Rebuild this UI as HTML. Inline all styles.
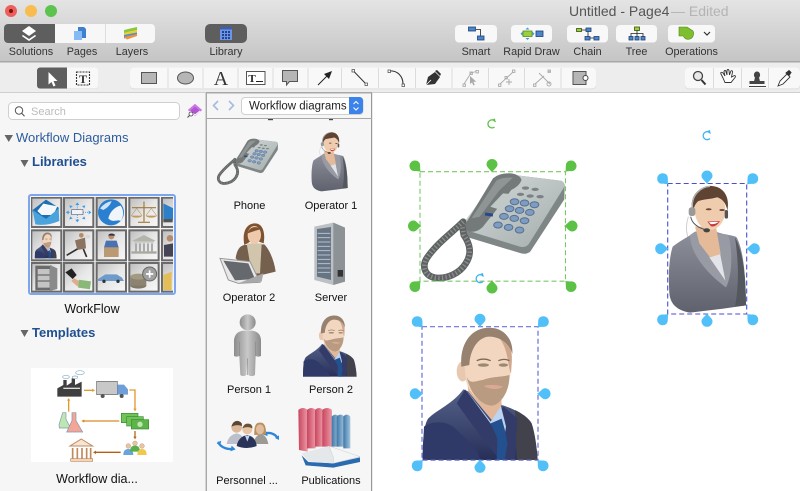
<!DOCTYPE html>
<html><head><meta charset="utf-8"><title>Untitled - Page4</title>
<style>
html,body{margin:0;padding:0;width:800px;height:491px;overflow:hidden;background:#fff}
svg{display:block;position:absolute;left:0;top:0}
text{font-family:"Liberation Sans",sans-serif}
.tb{font-size:10.8px;fill:#333;text-anchor:middle}
.lb{font-size:11px;fill:#111;text-anchor:middle}
.hd{font-size:13px;font-weight:bold;fill:#1f4f91}
</style></head><body>
<svg width="800" height="491" viewBox="0 0 800 491" xmlns="http://www.w3.org/2000/svg">
<defs>
<linearGradient id="tg" x1="0" y1="0" x2="0" y2="1"><stop offset="0" stop-color="#e4e4e4"/><stop offset="1" stop-color="#c5c5c5"/></linearGradient>
<linearGradient id="pb" x1="0" y1="0" x2="1" y2="1"><stop offset="0" stop-color="#d6dcdc"/><stop offset="1" stop-color="#a4acac"/></linearGradient>
<linearGradient id="jk" x1="0" y1="0" x2="0" y2="1"><stop offset="0" stop-color="#8d909a"/><stop offset="1" stop-color="#5f626c"/></linearGradient>
<linearGradient id="nv" x1="0" y1="0" x2="0" y2="1"><stop offset="0" stop-color="#566289"/><stop offset="1" stop-color="#262f58"/></linearGradient>
<linearGradient id="gp" x1="0" y1="0" x2="1" y2="0"><stop offset="0" stop-color="#8c8c8c"/><stop offset=".5" stop-color="#c8c8c8"/><stop offset="1" stop-color="#8a8a8a"/></linearGradient>
<linearGradient id="rd" x1="0" y1="0" x2="1" y2="0"><stop offset="0" stop-color="#c9455f"/><stop offset="1" stop-color="#eb9aa6"/></linearGradient>
<linearGradient id="bl" x1="0" y1="0" x2="1" y2="0"><stop offset="0" stop-color="#3f77a8"/><stop offset="1" stop-color="#a2c4dc"/></linearGradient>
<linearGradient id="cell" x1="0" y1="0" x2="1" y2="1"><stop offset="0" stop-color="#bdbdbd"/><stop offset=".5" stop-color="#e6e6e6"/><stop offset="1" stop-color="#f8f8f8"/></linearGradient>
<clipPath id="thumbclip"><rect x="31" y="197" width="142" height="96"/></clipPath>

<path id="h" d="M-5.5,0A5.5,5.5 0 1 1 5.5,0C5.5,3 1.5,5 0,8C-1.5,5 -5.5,3 -5.5,0Z"/>

<symbol id="phone" viewBox="60 185 440 330" preserveAspectRatio="none">
<path d="M190,345L295,200Q305,190 320,192L485,212Q497,216 496,232L495,268L392,425Q380,434 365,430L205,382Q188,372 190,345Z" fill="#7f8686"/>
<path d="M190,340L295,200Q305,190 320,192L485,212Q497,216 494,232L388,402Q378,414 362,410L205,362Q188,355 190,340Z" fill="url(#pb)"/>
<path d="M195,345L280,205Q300,188 335,190Q362,194 366,210Q360,228 335,240L290,300L248,352Q225,372 203,362Q190,355 195,345Z" fill="#747a7a"/>
<path d="M215,325L290,212Q310,200 340,203L300,240L240,320Z" fill="#8f9595"/>
<path d="M272,290L310,250L335,252L298,298Z" fill="#c0c9c6"/>
<rect x="256" y="309" width="24" height="9" fill="#27488c" transform="rotate(8 268 313)"/>
<g fill="#7c8284"><ellipse cx="378" cy="234" rx="11" ry="5"/><ellipse cx="407" cy="238" rx="11" ry="5"/><ellipse cx="363" cy="253" rx="11" ry="5"/><ellipse cx="392" cy="258" rx="11" ry="5"/><ellipse cx="422" cy="260" rx="11" ry="5"/></g>
<g fill="#7e9cc2" stroke="#56708f" stroke-width="3"><ellipse cx="345" cy="275" rx="13" ry="9"/><ellipse cx="375" cy="279" rx="13" ry="9"/><ellipse cx="405" cy="284" rx="13" ry="9"/><ellipse cx="330" cy="296" rx="13" ry="9"/><ellipse cx="360" cy="301" rx="13" ry="9"/><ellipse cx="391" cy="307" rx="13" ry="9"/><ellipse cx="313" cy="319" rx="13" ry="9"/><ellipse cx="344" cy="325" rx="13" ry="9"/><ellipse cx="375" cy="332" rx="13" ry="9"/><ellipse cx="295" cy="345" rx="13" ry="9"/><ellipse cx="327" cy="352" rx="13" ry="9"/><ellipse cx="360" cy="360" rx="13" ry="9"/></g>
<path d="M190,335C160,365 110,400 80,445C65,470 75,498 105,503C140,508 180,490 198,460C218,430 210,400 192,375L188,352" fill="none" stroke="#5f6262" stroke-width="20" stroke-linecap="round"/>
<path d="M190,335C160,365 110,400 80,445C65,470 75,498 105,503C140,508 180,490 198,460C218,430 210,400 192,375L188,352" fill="none" stroke="#8b8e8e" stroke-width="14" stroke-dasharray="4 7"/>
</symbol>

<symbol id="op1" viewBox="83 190 237 392" preserveAspectRatio="none">
<path d="M98,380C120,362 150,348 165,335L228,335C252,345 280,345 290,352C305,380 317,440 318,556L250,566L150,578C120,572 92,560 88,520C84,460 88,410 98,380Z" fill="url(#jk)"/>
<path d="M285,352C305,390 317,450 318,556L285,560C298,490 295,420 285,352Z" fill="#55575f"/>
<path d="M150,345C150,400 200,460 258,502C275,470 280,400 265,345L232,340L240,420L165,335Z" fill="#989ba4"/>
<path d="M208,412L240,400L256,482Z" fill="#e3e4ea"/>
<path d="M165,320L228,320L242,402L210,412L178,370Z" fill="#e5ba98"/>
<ellipse cx="210" cy="270" rx="46" ry="60" fill="#f0ccae"/>
<path d="M156,268C148,218 190,196 215,198C252,200 270,232 262,272C258,250 248,238 232,232C212,238 186,238 174,244C166,252 162,260 162,270Z" fill="#5f4333"/>
<path d="M158,270C150,225 185,200 210,199" fill="none" stroke="#b0b0b0" stroke-width="4"/>
<rect x="146" y="262" width="20" height="26" rx="8" fill="#9a9a9a"/><rect x="254" y="270" width="10" height="26" rx="5" fill="#555"/>
<path d="M152,290C155,310 175,325 200,330" fill="none" stroke="#555" stroke-width="3"/>
<path d="M145,290C135,320 140,340 143,350" fill="none" stroke="#cfcfcf" stroke-width="3"/>
<ellipse cx="200" cy="331" rx="10" ry="6" fill="#444"/>
<ellipse cx="206" cy="268" rx="9" ry="3" fill="#6a4a38"/><ellipse cx="246" cy="270" rx="8" ry="3" fill="#6a4a38"/>
<path d="M202,305Q222,303 240,304Q225,325 212,318Z" fill="#c7393f"/><path d="M206,307Q222,305 236,306Q224,314 212,312Z" fill="#fff"/>
</symbol>

<symbol id="man" viewBox="66 50 347 400" preserveAspectRatio="none">
<path d="M68,450C68,400 70,345 85,325C110,300 160,280 190,238L305,285C340,295 385,320 395,340C405,370 410,410 413,450Z" fill="url(#nv)"/>
<path d="M72,350C100,330 150,330 180,370C215,400 235,420 240,450H68Z" fill="#2f3a68"/>
<path d="M345,300C385,320 392,335 397,350C405,380 410,415 413,450L350,450Z" fill="#42424c"/>
<path d="M170,280L195,238L272,335L310,290L352,325L345,450L300,450L250,390Z" fill="#333c68"/>
<path d="M198,240L272,335L302,285L318,350L312,385L275,345Z" fill="#bcd4f0"/>
<path d="M272,340L305,326L314,358L322,400L314,450L290,450L292,385Z" fill="#23508e"/>
<path d="M200,200L300,200L305,285L275,330L205,245Z" fill="#e3b89a"/>
<ellipse cx="188" cy="184" rx="18" ry="30" fill="#e8c8ae"/>
<path d="M190,130C190,85 225,60 270,60C315,60 338,100 335,145C335,205 318,262 280,287C245,287 212,255 198,215Z" fill="#f3d6bf"/>
<path d="M295,80C330,90 338,125 335,160L333,190C322,170 328,120 295,80Z" fill="#cfa78e"/>
<path d="M184,170C178,100 215,52 268,53C312,52 340,88 337,132C328,100 300,78 262,80C232,85 210,120 208,165Z" fill="#97816f"/>
<path d="M200,200C210,225 228,212 248,210C270,200 300,202 328,195C330,240 305,280 278,287C245,287 212,255 200,200Z" fill="#b89b80"/>
<path d="M250,228Q280,220 310,230Q285,245 250,228Z" fill="#dba998"/>
<ellipse cx="250" cy="165" rx="17" ry="5" fill="#9a8870"/><ellipse cx="310" cy="165" rx="14" ry="5" fill="#9a8870"/>
<path d="M230,152Q250,142 272,152M295,152Q312,144 328,152" fill="none" stroke="#7e6858" stroke-width="4"/>
</symbol>
</defs>

<!-- background -->
<rect width="800" height="491" fill="#fff"/>
<rect width="800" height="61" fill="url(#tg)"/>
<rect y="61" width="800" height="1.5" fill="#a8a8a8"/>
<rect y="62.5" width="800" height="30" fill="#ededed"/>
<rect y="92" width="800" height="1" fill="#cfcfcf"/>
<rect y="93" width="206" height="398" fill="#f6f6f6"/>
<rect x="205" y="93" width="1" height="398" fill="#d4d4d4"/>
<rect x="206" y="93" width="166" height="398" fill="#f6f6f6"/>
<rect x="206" y="92" width="166" height="1.5" fill="#a8a8a8"/>
<rect x="206" y="93" width="1" height="398" fill="#a8a8a8"/>
<rect x="371" y="93" width="1.2" height="398" fill="#999"/>
<rect x="206" y="118" width="166" height="1" fill="#a8a8a8"/>

<!-- traffic -->
<circle cx="11" cy="11" r="6" fill="#ee5f5b"/><circle cx="11" cy="11" r="2" fill="#6b1712"/>
<circle cx="31" cy="11" r="6" fill="#f8bd4e"/><circle cx="51" cy="11" r="6" fill="#5cc34f"/>

<!-- top seg -->
<rect x="4" y="24" width="151" height="19" rx="4" fill="#f7f7f7"/>
<path d="M8,24H55V43H8a4,4 0 0 1 -4,-4V28a4,4 0 0 1 4,-4Z" fill="#5e5e5e"/>
<rect x="105" y="24" width="1" height="19" fill="#ddd"/>
<path d="M29,26l7,5 -7,5 -7,-5Z" fill="#fff"/><path d="M23,35l6,4 6,-4 1.2,1 -7.2,5 -7.2,-5Z" fill="#fff"/>
<path d="M78,27h6l2,2v9h-8Z" fill="#3f7fd0"/><path d="M74,31h8v9h-8Z" fill="#86baf3"/>
<path d="M124,30l13,-3v3l-13,3Z" fill="#8cc63f"/><path d="M124,33l13,-3v3l-13,3Z" fill="#f0cd2e"/><path d="M124,35l13,-2.5v3l-13,3Z" fill="#4f8fd8"/><path d="M124,37l13,-3v2l-10,3.5Z" fill="#f0923a"/>
<text x="31" y="55" class="tb">Solutions</text><text x="82" y="55" class="tb">Pages</text><text x="132" y="55" class="tb">Layers</text>

<rect x="205" y="24" width="42" height="19" rx="5" fill="#5e5e5e"/>
<rect x="220" y="27" width="12" height="13" fill="#6c95e8"/><rect x="220" y="27" width="12" height="2.5" fill="#3c5fb0"/>
<g fill="#24428c"><rect x="222" y="31" width="2" height="2"/><rect x="225" y="31" width="2" height="2"/><rect x="228" y="31" width="2" height="2"/><rect x="222" y="34" width="2" height="2"/><rect x="225" y="34" width="2" height="2"/><rect x="228" y="34" width="2" height="2"/><rect x="222" y="37" width="2" height="2"/><rect x="225" y="37" width="2" height="2"/><rect x="228" y="37" width="2" height="2"/></g>
<text x="226" y="55" class="tb">Library</text>

<!-- title -->
<text x="569" y="16" font-size="14" fill="#555">Untitled - Page4</text>
<text x="671" y="16" font-size="14" fill="#b4b4b4">— Edited</text>

<!-- right buttons -->
<g fill="#f8f8f8"><rect x="455" y="25" width="42" height="17.5" rx="4"/><rect x="511" y="25" width="41" height="17.5" rx="4"/><rect x="567" y="25" width="41" height="17.5" rx="4"/><rect x="616" y="25" width="41" height="17.5" rx="4"/><rect x="668" y="25" width="47" height="17.5" rx="4"/></g>
<path d="M476,29.5h4.5V36" fill="none" stroke="#222" stroke-width=".8"/>
<rect x="468.5" y="27" width="7" height="4" fill="#4a86c8" stroke="#1c3f78" stroke-width=".8"/><rect x="477.5" y="36" width="6.5" height="4" fill="#4a86c8" stroke="#1c3f78" stroke-width=".8"/>
<rect x="523" y="31" width="9" height="5.5" fill="#9ad03c" stroke="#5a8a1e" stroke-width=".8"/>
<rect x="536" y="31" width="7" height="5.5" fill="#4a86c8" stroke="#1c3f78" stroke-width=".8"/>
<path d="M527.5,27.5l2,2h-4ZM527.5,40l2,-2h-4ZM520.5,33.7l2,-2v4ZM534.5,33.7l-2,-2v4Z" fill="#3a96e8"/>
<rect x="576.5" y="28.5" width="5" height="3" fill="#9ad03c" stroke="#36520e" stroke-width=".8"/>
<rect x="586" y="28" width="5" height="3.5" fill="#4a86c8" stroke="#1c3f78" stroke-width=".8"/>
<rect x="585" y="36.5" width="5" height="3.5" fill="#4a86c8" stroke="#1c3f78" stroke-width=".8"/><rect x="594" y="36.5" width="5" height="3.5" fill="#4a86c8" stroke="#1c3f78" stroke-width=".8"/>
<path d="M581.5,30h4.5M588,31.5v5M590,38h4" stroke="#222" stroke-width=".8"/>
<rect x="634.5" y="27" width="5" height="3.5" fill="#9ad03c" stroke="#36520e" stroke-width=".8"/>
<g fill="#4a86c8" stroke="#1c3f78" stroke-width=".8"><rect x="629" y="36.5" width="4" height="3.5"/><rect x="635" y="36.5" width="4" height="3.5"/><rect x="641" y="36.5" width="4" height="3.5"/></g>
<path d="M637,30.5v6M631,36.5v-3h12v3" fill="none" stroke="#222" stroke-width=".8"/>
<path d="M679,27h8l6,4c1.5,3 0,7 -3,8c-3,1 -6,-.5 -6.5,-3h-4.5Z" fill="#7fbe2e" stroke="#4d8a16" stroke-width=".6"/>
<path d="M704,32l3,3 3,-3" fill="none" stroke="#333" stroke-width="1.2"/>
<text x="476" y="55" class="tb">Smart</text><text x="531.5" y="55" class="tb">Rapid Draw</text><text x="587.5" y="55" class="tb">Chain</text><text x="636.5" y="55" class="tb">Tree</text><text x="691.5" y="55" class="tb">Operations</text>

<!-- toolbar groups -->
<rect x="37" y="67.5" width="61" height="21.5" rx="3" fill="#ddd"/>
<rect x="37" y="67.5" width="61" height="21" rx="3" fill="#f8f8f8"/>
<path d="M40,67.5H67V88.5H40a3,3 0 0 1 -3,-3V70.5a3,3 0 0 1 3,-3Z" fill="#5e5e5e"/>
<path d="M48.5,72v12.5l3,-2.5 2,4.5 2,-1 -2,-4.500h4Z" fill="#fff"/>
<rect x="76.5" y="72" width="13" height="13" fill="none" stroke="#333" stroke-width="1.1" stroke-dasharray="2 1"/>
<text x="83" y="83" font-size="12" font-weight="bold" text-anchor="middle" fill="#333" style="font-family:'Liberation Serif',serif">T</text>

<rect x="130" y="67.5" width="466" height="21.8" rx="4" fill="#d8d8d8"/>
<rect x="130" y="67.5" width="466" height="21" rx="4" fill="#f8f8f8"/>
<g fill="#dcdcdc"><rect x="167.5" y="68" width="1" height="20"/><rect x="202.5" y="68" width="1" height="20"/><rect x="237.5" y="68" width="1" height="20"/><rect x="272.5" y="68" width="1" height="20"/><rect x="307.5" y="68" width="1" height="20"/><rect x="341" y="68" width="1" height="20"/><rect x="378" y="68" width="1" height="20"/><rect x="415" y="68" width="1" height="20"/><rect x="451.5" y="68" width="1" height="20"/><rect x="488" y="68" width="1" height="20"/><rect x="524" y="68" width="1" height="20"/><rect x="560.5" y="68" width="1" height="20"/></g>
<rect x="141.5" y="72.5" width="15" height="11" fill="#b6b6b6" stroke="#555" stroke-width="1"/>
<ellipse cx="185.5" cy="78" rx="8" ry="6" fill="#b6b6b6" stroke="#555" stroke-width="1"/>
<text x="221" y="85" font-size="20" text-anchor="middle" fill="#333" style="font-family:'Liberation Serif',serif">A</text>
<rect x="246.5" y="71.5" width="18.5" height="13" fill="#fff" stroke="#555" stroke-width="1"/>
<text x="252" y="82" font-size="11" font-weight="bold" text-anchor="middle" fill="#222" style="font-family:'Liberation Serif',serif">T</text><rect x="256" y="81" width="7" height="1" fill="#222"/>
<path d="M282.5,70.5h15v11h-8l-3,3.5v-3.5h-4Z" fill="#b6b6b6" stroke="#555" stroke-width="1"/>
<path d="M318,85L330,73" stroke="#222" stroke-width="1"/><path d="M332,71l-3,8 -5,-5Z" fill="#222"/>
<path d="M353,70.5L366,84" stroke="#333" stroke-width="1"/><rect x="352" y="69.5" width="2.5" height="2.5" fill="#fff" stroke="#444" stroke-width=".7"/><rect x="365" y="83" width="2.5" height="2.5" fill="#fff" stroke="#444" stroke-width=".7"/>
<path d="M389,71C397,70 403,76 403,84" fill="none" stroke="#333" stroke-width="1.1"/><rect x="388" y="70" width="2.5" height="2.5" fill="#fff" stroke="#444" stroke-width=".7"/><rect x="402" y="84" width="2.5" height="2.5" fill="#fff" stroke="#444" stroke-width=".7"/>
<path d="M426,85l2,-8 7,-5 5,5 -5,7Z" fill="#333"/><path d="M426,85l5,-5" stroke="#fff" stroke-width=".8"/><path d="M435,71l2,-1 4,4 -1,2Z" fill="#333"/>
<g fill="none" stroke="#aaa" stroke-width=".9">
<path d="M464,84L471,73L476,71.5"/><rect x="463" y="84" width="2.4" height="2.4"/><rect x="470" y="72" width="2.4" height="2.4"/><rect x="476" y="70.5" width="2.4" height="2.4"/>
<path d="M500,84L513,72"/><rect x="498.5" y="84" width="2.4" height="2.4"/><rect x="512.5" y="70" width="2.4" height="2.4"/><rect x="505" y="76.5" width="2.4" height="2.4"/>
<path d="M535,84L544,76M548,72L550,71M539,73L550,84"/><rect x="533.5" y="84" width="2.4" height="2.4"/><rect x="548" y="70" width="2.4" height="2.4"/><circle cx="549" cy="84" r="2"/>
</g>
<path d="M470,76v8l2,-1.5 1.5,3 1.3,-.7 -1.5,-3h3Z" fill="#aaa"/>
<path d="M506,82h6M509,79v6" stroke="#aaa" stroke-width="1"/>
<rect x="573" y="71.5" width="13" height="13" fill="#b6b6b6" stroke="#555" stroke-width="1"/><circle cx="585.5" cy="78" r="2.5" fill="#fff" stroke="#444"/>

<rect x="685" y="67.5" width="115" height="21.8" rx="4" fill="#d8d8d8"/>
<rect x="685" y="67.5" width="115" height="21" rx="4" fill="#f8f8f8"/>
<g fill="#dcdcdc"><rect x="713" y="68" width="1" height="20"/><rect x="741" y="68" width="1" height="20"/><rect x="768" y="68" width="1" height="20"/></g>
<circle cx="698" cy="76" r="4.5" fill="#e8e8e8" stroke="#444" stroke-width="1.3"/><path d="M701.5,80l4,4.5" stroke="#333" stroke-width="2"/>
<path d="M723,78l-2,-4c-1,-2 1,-2 2,-1l2,3 -1,-4c0,-2 2,-2 2,0l1,3 0,-4c0,-2 2,-2 2,0l.5,4 1,-3c.5,-2 2,-1.5 2,0l-1,5 2,-1c1.5,-1 2.5,0 1.5,1.5l-4,5h-6Z" fill="#fff" stroke="#333" stroke-width=".9"/>
<path d="M749,86.5h17M750,83.5h14v-2h-4.5l-1,-4c2,-2 1,-5.500 -1.5,-5.500s-3.500,3.500 -1.500,5.500l-1,4h-4.500Z" fill="#444" stroke="#444" stroke-width="1"/>
<path d="M778,86l2,-5 7,-7 3,3 -7,7Z" fill="#fff" stroke="#333" stroke-width=".9"/><path d="M786,73l3,-2.5 2,2 -2,3Z" fill="#333" stroke="#333"/>

<!-- search -->
<rect x="8.5" y="102.5" width="171" height="17" rx="4" fill="#fff" stroke="#cfcfcf"/>
<circle cx="19" cy="110.5" r="3.7" fill="none" stroke="#555" stroke-width="1"/><path d="M21.7,113.3l2.8,3" stroke="#555" stroke-width="1.1"/>
<text x="31" y="115" font-size="11" fill="#bbb">Search</text>
<path d="M195,104l7,6 -7,6 -7,-6Z" fill="#b254d6"/><path d="M195,104l7,6 -1.5,1.3 -5.5,-4.600 -5.5,4.600 -1.5,-1.3Z" fill="#c977e6"/><path d="M190,111l5,4 5,-4" stroke="#fff" stroke-width="1" fill="none"/>
<circle cx="191" cy="114" r="2" fill="#fff" stroke="#444" stroke-width=".8"/><path d="M189.5,115.5l-2,2" stroke="#444"/>

<!-- tree -->
<path d="M4.5,135h8.500l-4.250,7Z" fill="#666"/>
<text x="16" y="142" font-size="13" fill="#2c5c9c">Workflow Diagrams</text>
<path d="M20.5,160h8l-4,7Z" fill="#666"/>
<text x="32" y="166" class="hd">Libraries</text>

<!-- library thumb -->
<rect x="29" y="195" width="146" height="99" rx="2" fill="#f4f4f4" stroke="#7ea6ee" stroke-width="2"/>
<g clip-path="url(#thumbclip)">
<g transform="translate(0,95) scale(.3333)">
<g fill="url(#cell)" stroke="#6a6a6a" stroke-width="6">
<rect x="94" y="308" width="90" height="88"/><rect x="192" y="308" width="88" height="88"/><rect x="290" y="308" width="88" height="88"/><rect x="388" y="308" width="88" height="88"/><rect x="486" y="308" width="88" height="88"/>
<rect x="94" y="406" width="90" height="90"/><rect x="192" y="406" width="88" height="90"/><rect x="290" y="406" width="88" height="90"/><rect x="388" y="406" width="88" height="90"/><rect x="486" y="406" width="88" height="90"/>
<rect x="94" y="504" width="90" height="86"/><rect x="192" y="504" width="88" height="86"/><rect x="290" y="504" width="88" height="86"/><rect x="388" y="504" width="88" height="86"/><rect x="486" y="504" width="88" height="86"/>
</g>
<!-- envelope -->
<path d="M98,345L138,314L176,338V350L138,372L98,350Z" fill="#1f6fb0"/><path d="M112,348L130,326L172,334L160,360H125Z" fill="#f4f8fb"/><path d="M98,345L138,372L176,340L178,378Q140,394 106,388Z" fill="#4aa3dc"/>
<!-- network -->
<rect x="215" y="344" width="34" height="15" fill="#f2f2f6" stroke="#667" stroke-width="2"/>
<g fill="#3f9be6"><path d="M232,322l6,8h-12ZM232,382l6,-8h-12ZM198,352l8,-6v12ZM274,352l-8,-6v12ZM208,331l10,2 -7,7ZM256,331l-10,2 7,7ZM208,373l10,-2 -7,-7ZM256,373l-10,-2 7,-7Z"/></g>
<g stroke="#3f9be6" stroke-width="2.5" stroke-dasharray="3 3"><path d="M232,344V330M232,360V374M215,352H206M249,352H266"/></g>
<!-- globe -->
<circle cx="333" cy="352" r="39" fill="#2a7fd0"/><path d="M325,370C330,350 345,335 362,332C372,345 372,365 362,378C350,372 340,385 325,370Z" fill="#f0f5f9"/><path d="M300,340Q315,322 335,318Q330,335 310,345Z" fill="#cfe3f3"/>
<!-- scale -->
<path d="M432,320V380M396,338H468M414,382H450" stroke="#a07a3a" stroke-width="3.500" fill="none"/><path d="M393,362a18,9 0 0 0 34,0ZM437,362a18,9 0 0 0 34,0Z" fill="#c49a55"/><path d="M410,340L394,362M410,340L426,362M454,340L438,362M454,340L470,362" stroke="#a07a3a" stroke-width="1.500"/>
<!-- monitor -->
<path d="M490,325L530,345V375L490,372Z" fill="#2d80c8"/><rect x="490" y="372" width="28" height="10" fill="#555"/>
<!-- man -->
<use href="#man" x="104" y="412" width="66" height="78"/>
<!-- runner -->
<circle cx="244" cy="421" r="7" fill="#b58b6a"/><path d="M225,436L255,428L258,460L232,465Z" fill="#8a7460"/><path d="M232,462L200,481M250,462L260,486" stroke="#333" stroke-width="5" fill="none"/><rect x="256" y="420" width="14" height="10" fill="#d8d8d8"/>
<!-- worker -->
<circle cx="334" cy="424" r="9" fill="#b88e6e"/><path d="M335,416q-10,0 -10,6h20q0,-6 -10,-6Z" fill="#334"/><path d="M312,458L318,437L350,437L356,458Z" fill="#4a72b0"/><rect x="312" y="457" width="44" height="29" fill="#b99a72"/>
<!-- bank -->
<path d="M432,420L468,438H396Z" fill="#b4b4ac"/><rect x="402" y="438" width="60" height="5" fill="#c4c4bc"/><path d="M408,445v24M420,445v24M432,445v24M444,445v24M456,445v24" stroke="#aaa" stroke-width="6"/><rect x="394" y="469" width="76" height="7" fill="#a8a8a0"/>
<!-- person partial -->
<circle cx="510" cy="430" r="10" fill="#b58b6a"/><path d="M492,485V450L520,445V485Z" fill="#445"/>
<!-- safe -->
<rect x="106" y="512" width="50" height="74" fill="#6b6b6b"/><rect x="113" y="522" width="36" height="56" fill="#c4c4c4"/><path d="M113,540h36M113,558h36" stroke="#555" stroke-width="3"/><path d="M150,510L172,520V582L150,588Z" fill="#8a8a8a"/>
<!-- hand -->
<path d="M196,532L215,520L230,540L218,552Z" fill="#222"/><path d="M222,550L248,562L232,574L214,558Z" fill="#dcae8e"/><rect x="236" y="556" width="36" height="24" fill="#8ab878" transform="rotate(8 250 565)"/>
<!-- car -->
<path d="M294,552L316,538L350,538L366,548L372,558H294Z" fill="#6d9ccc"/><circle cx="312" cy="559" r="5" fill="#333"/><circle cx="354" cy="559" r="5" fill="#333"/>
<!-- coins -->
<ellipse cx="415" cy="572" rx="24" ry="9" fill="#807868"/><rect x="391" y="545" width="48" height="27" fill="#8c8470"/><ellipse cx="415" cy="545" rx="24" ry="9" fill="#a39a84"/><circle cx="449" cy="537" r="21" fill="#a0a0a0" stroke="#666" stroke-width="3"/><path d="M449,526v22M438,537h22" stroke="#fff" stroke-width="5"/>
<!-- folder -->
<path d="M490,540L515,530V585H490Z" fill="#e3bd5a"/>
</g></g>
<text x="92" y="313" font-size="12.5" fill="#111" text-anchor="middle">WorkFlow</text>

<path d="M20.5,330h8l-4,7Z" fill="#666"/>
<text x="32" y="337" class="hd">Templates</text>

<!-- template image -->
<rect x="31" y="368" width="142" height="94" fill="#fff"/>
<g transform="translate(0,320) scale(.3333)">
<path d="M172,230V205L190,195V180H200V197L215,187V175H225V195L245,185V230Z" fill="#3f3f3f"/>
<ellipse cx="198" cy="171" rx="10" ry="5" fill="#fff" stroke="#8ab0cc" stroke-width="2"/><ellipse cx="240" cy="158" rx="13" ry="6" fill="#fff" stroke="#8ab0cc" stroke-width="2"/><ellipse cx="225" cy="172" rx="8" ry="4" fill="#fff" stroke="#8ab0cc" stroke-width="2"/>
<rect x="190" y="203" width="50" height="4" fill="#ddd"/>
<path d="M252,211H280" stroke="#e39a2d" stroke-width="4"/><path d="M285,211l-8,-5v10Z" fill="#e39a2d"/>
<rect x="290" y="184" width="62" height="40" fill="#c8c8c8" stroke="#666" stroke-width="2"/><path d="M352,194H372L384,208V224H352Z" fill="#6f9fd6"/><circle cx="308" cy="228" r="6" fill="#555"/><circle cx="365" cy="228" r="6" fill="#555"/>
<path d="M388,210H405V268" stroke="#e39a2d" stroke-width="4" fill="none"/><path d="M405,274l-5,-8h10Z" fill="#e39a2d"/>
<rect x="364" y="280" width="50" height="28" fill="#6fc458" stroke="#3e8a35" stroke-width="2"/><rect x="380" y="290" width="50" height="28" fill="#6fc458" stroke="#3e8a35" stroke-width="2"/><rect x="394" y="299" width="52" height="28" fill="#5cb548" stroke="#3e8a35" stroke-width="2"/><circle cx="420" cy="313" r="8" fill="#bde6b0"/>
<path d="M358,303H250" stroke="#d98b25" stroke-width="4"/><path d="M244,303l9,-5v10Z" fill="#d98b25"/>
<path d="M405,333V352" stroke="#b86a1a" stroke-width="4"/><path d="M405,358l-5,-8h10Z" fill="#b86a1a"/>
<path d="M206,275V240" stroke="#e39a2d" stroke-width="4"/><path d="M206,234l-5,8h10Z" fill="#e39a2d"/>
<path d="M188,278h10v20l14,26h-34l-1,-10Z" fill="#bfe6b0" stroke="#7a97b5" stroke-width="2"/>
<path d="M216,278h12v24l20,34h-48l16,-34Z" fill="#f4a596" stroke="#7a97b5" stroke-width="2"/>
<path d="M244,357L278,378H210Z" fill="#f6e4d4" stroke="#c08a5d" stroke-width="3"/><path d="M218,384v32M232,384v32M246,384v32M260,384v32M272,384v32" stroke="#c08a5d" stroke-width="5"/><rect x="212" y="416" width="66" height="8" fill="#f0d6bd" stroke="#c08a5d" stroke-width="2"/>
<path d="M362,397H285" stroke="#b85c12" stroke-width="4"/><path d="M279,397l9,-5v10Z" fill="#b85c12"/>
<circle cx="385" cy="378" r="7" fill="#e8c4a4" stroke="#9a7a5a"/><path d="M370,405q0,-18 15,-18t15,18Z" fill="#6da3dc"/>
<circle cx="405" cy="370" r="7" fill="#e8c4a4" stroke="#9a7a5a"/><path d="M390,395q0,-18 15,-18t15,18Z" fill="#57b04a"/>
<circle cx="426" cy="378" r="7" fill="#e8c4a4" stroke="#9a7a5a"/><path d="M412,405q0,-18 14,-18t14,18Z" fill="#efc84d"/>
</g>
<text x="97" y="483" font-size="12.5" fill="#111" text-anchor="middle">Workflow dia...</text>

<!-- middle header -->
<path d="M218,101l-4.5,4.5 4.5,4.5M229,101l4.5,4.5 -4.5,4.5" fill="none" stroke="#a4bbe2" stroke-width="1.6"/>
<rect x="241.5" y="97.5" width="121.5" height="17" rx="3.5" fill="#fff" stroke="#d0d0d0"/>
<path d="M349,97h10.5a3.5,3.5 0 0 1 3.5,3.5v10a3.5,3.5 0 0 1 -3.5,3.5h-10.5Z" fill="#3b82ea"/>
<path d="M353.5,104l2.5,-2.5 2.5,2.5M353.5,107.5l2.5,2.5 2.5,-2.5" fill="none" stroke="#fff" stroke-width="1"/>
<text x="249" y="109.5" font-size="11.5" fill="#222">Workflow diagrams</text>
<rect x="268" y="119" width="5" height="1.2" fill="#444"/><rect x="329" y="119" width="4" height="1.2" fill="#444"/>

<!-- stencils -->
<use href="#phone" x="216.5" y="138" width="62" height="47"/>
<use href="#op1" x="311" y="131" width="37" height="61"/>
<text x="249.5" y="209" class="lb">Phone</text><text x="331" y="209" class="lb">Operator 1</text>

<!-- operator 2 -->
<g transform="translate(205,95) scale(.3333)">
<path d="M118,450C105,452 95,465 92,490L150,545L212,530C208,500 195,465 178,448Z" fill="#75604e"/>
<path d="M125,445L170,445L165,535L140,535Z" fill="#d2c5ae"/>
<path d="M118,450C110,405 128,385 150,385C172,385 182,410 176,445L162,440H136Z" fill="#7d5331"/>
<ellipse cx="148" cy="420" rx="20" ry="27" fill="#eec9ac"/>
<path d="M128,415C132,398 150,390 168,402C160,405 140,410 128,415Z" fill="#7d5331"/>
<path d="M45,490L135,500L165,562L100,565L70,555Z" fill="#e8e8e8" stroke="#999" stroke-width="3"/>
<path d="M55,497L130,505L150,552L90,556Z" fill="#65696e"/>
<path d="M100,565L175,535L170,560Z" fill="#a8a8a8"/>
</g>

<!-- server -->
<g transform="translate(205,95) scale(.3333)">
<path d="M328,395L385,383L420,398V560L385,570L328,555Z" fill="#bcc1c5"/>
<path d="M385,383V570L420,560V398Z" fill="#8d9297"/>
<path d="M336,402L378,396V555L336,545Z" fill="#6a7480"/>
<g stroke="#a9c2dc" stroke-width="3"><path d="M338,415h38M338,428h38M338,441h38M338,454h38M338,467h38M338,480h38M338,493h38M338,506h38M338,519h38M338,532h38"/></g>
<path d="M398,525h16v20h-16Z" fill="#333"/>
</g>
<text x="249" y="301" class="lb">Operator 2</text><text x="331" y="301" class="lb">Server</text>

<!-- person 1 -->
<g transform="translate(205,300) scale(.3333)">
<circle cx="128" cy="67" r="24" fill="url(#gp)"/>
<path d="M87,120Q90,95 115,92H141Q166,95 168,120V168Q160,172 152,168L150,225Q140,232 130,225L127,175L124,225Q114,232 106,225L103,168Q95,172 87,168Z" fill="url(#gp)"/>
<path d="M103,125V168M152,125V168M127,175V225" stroke="#8a8a8a" stroke-width="2" fill="none"/>
</g>
<use href="#man" x="302.7" y="315" width="54" height="61.7"/>
<text x="249" y="393" class="lb">Person 1</text><text x="331" y="393" class="lb">Person 2</text>

<!-- personnel -->
<g transform="translate(205,300) scale(.3333)">
<path d="M40,425C45,445 75,450 85,445" fill="none" stroke="#2e86d8" stroke-width="7"/><path d="M35,430l14,-8 -4,15Z" fill="#2e86d8"/><path d="M80,437l12,11 -16,6Z" fill="#2e86d8"/>
<path d="M218,415C210,400 190,395 178,402" fill="none" stroke="#2e86d8" stroke-width="7"/><path d="M222,420l-12,-6 12,-8Z" fill="#2e86d8"/><path d="M186,394l-12,10 14,4Z" fill="#2e86d8"/>
<path d="M65,432Q70,405 95,400Q118,405 122,432Z" fill="#bcc0cc"/><circle cx="95" cy="382" r="16" fill="#dcb89a"/><path d="M79,380Q85,360 100,363Q112,366 111,378Q95,372 79,380Z" fill="#5a4632"/>
<path d="M145,432Q150,405 167,402Q185,405 190,432Z" fill="#9b9a94"/><path d="M148,405Q146,366 165,368Q184,366 183,403Z" fill="#b9905e"/><ellipse cx="165" cy="388" rx="12" ry="15" fill="#e2bc9e"/>
<path d="M95,438Q100,410 127,405Q152,410 155,438Q125,450 95,438Z" fill="#2a3358"/><path d="M120,407L127,425L134,407Z" fill="#bcd4f0"/><circle cx="127" cy="388" r="15" fill="#e8c4a6"/><path d="M112,385Q118,369 130,371Q143,372 142,385Q128,378 112,385Z" fill="#6a5238"/>
</g>

<!-- publications -->
<g transform="translate(205,300) scale(.3333)">
<path d="M280,330Q294,318 308,330V455L282,450Z" fill="url(#rd)"/><path d="M306,330Q319,318 332,330V445H306Z" fill="url(#rd)"/><path d="M330,330Q342,318 354,330V440H330Z" fill="url(#rd)"/><path d="M352,330Q366,318 381,330V440H352Z" fill="url(#rd)"/>
<path d="M380,350Q391,338 402,350V440H380Z" fill="url(#bl)"/><path d="M395,350Q406,338 418,350V440H395Z" fill="url(#bl)"/><path d="M415,350Q425,338 436,350V445H415Z" fill="url(#bl)"/>
<path d="M290,466L302,496L385,503L465,486V472L385,490L310,486Z" fill="#2a6aae"/>
<path d="M290,460L372,438L385,472L385,490L310,484Z" fill="#e4e8ea"/><path d="M372,438L465,470L385,490L385,472Z" fill="#f4f5f5" stroke="#b4b8c0" stroke-width="1"/>
</g>
<text x="247" y="484" class="lb">Personnel  ...</text><text x="331" y="484" class="lb">Publications</text>

<!-- canvas: phone -->
<use href="#phone" x="420" y="171.7" width="146" height="110"/>
<rect x="420" y="171.7" width="145.5" height="109.5" fill="none" stroke="#78c868" stroke-width="1.1" stroke-dasharray="5 3"/>
<g fill="#5cc246">
<use href="#h" transform="translate(415,166) rotate(-45)"/><use href="#h" transform="translate(492,164.5)"/><use href="#h" transform="translate(571,166) rotate(45)"/>
<use href="#h" transform="translate(413.5,226) rotate(-90)"/><use href="#h" transform="translate(572,226) rotate(90)"/>
<use href="#h" transform="translate(415,286.5) rotate(-135)"/><use href="#h" transform="translate(492,288) rotate(180)"/><use href="#h" transform="translate(571,286.5) rotate(135)"/>
</g>
<path d="M495.5,122A4,4 0 1 0 494.5,127" fill="none" stroke="#5cc246" stroke-width="1.3"/><path d="M492,119.5l3,-1 .5,3.5Z" fill="#5cc246"/>
<path d="M483.5,276.5A4,4 0 1 0 483,281.5" fill="none" stroke="#3fb5f0" stroke-width="1.3"/><path d="M480,274l3,-1 .5,3.5Z" fill="#3fb5f0"/>

<!-- canvas: operator -->
<use href="#op1" x="667.7" y="183.3" width="79" height="130.7"/>
<rect x="667.7" y="183.5" width="79" height="130.5" fill="none" stroke="#4a4ed0" stroke-width="1.1" stroke-dasharray="5 3"/>
<g fill="#52c0f8">
<use href="#h" transform="translate(662.7,178.7) rotate(-45)"/><use href="#h" transform="translate(707,176)"/><use href="#h" transform="translate(752.7,178.7) rotate(45)"/>
<use href="#h" transform="translate(660.7,248.7) rotate(-90)"/><use href="#h" transform="translate(754.3,248.7) rotate(90)"/>
<use href="#h" transform="translate(662.7,319.7) rotate(-135)"/><use href="#h" transform="translate(707,321.3) rotate(180)"/><use href="#h" transform="translate(752.7,319.7) rotate(135)"/>
</g>
<path d="M710.5,133.5A4,4 0 1 0 710,138.5" fill="none" stroke="#3fb5f0" stroke-width="1.3"/><path d="M707,131l3,-1 .5,3.5Z" fill="#3fb5f0"/>

<!-- canvas: man -->
<use href="#man" x="422" y="326.7" width="115.7" height="133.3"/>
<rect x="422" y="326.7" width="116" height="133.5" fill="none" stroke="#6c70d8" stroke-width="1.2" stroke-dasharray="5 3"/>
<g fill="#52c0f8">
<use href="#h" transform="translate(417.3,321.7) rotate(-45)"/><use href="#h" transform="translate(480,319.3)"/><use href="#h" transform="translate(543.3,321.7) rotate(45)"/>
<use href="#h" transform="translate(415.3,393.7) rotate(-90)"/><use href="#h" transform="translate(545,393.7) rotate(90)"/>
<use href="#h" transform="translate(417.3,465.7) rotate(-135)"/><use href="#h" transform="translate(480,467.3) rotate(180)"/><use href="#h" transform="translate(543,465.7) rotate(135)"/>
</g>
</svg>
</body></html>
